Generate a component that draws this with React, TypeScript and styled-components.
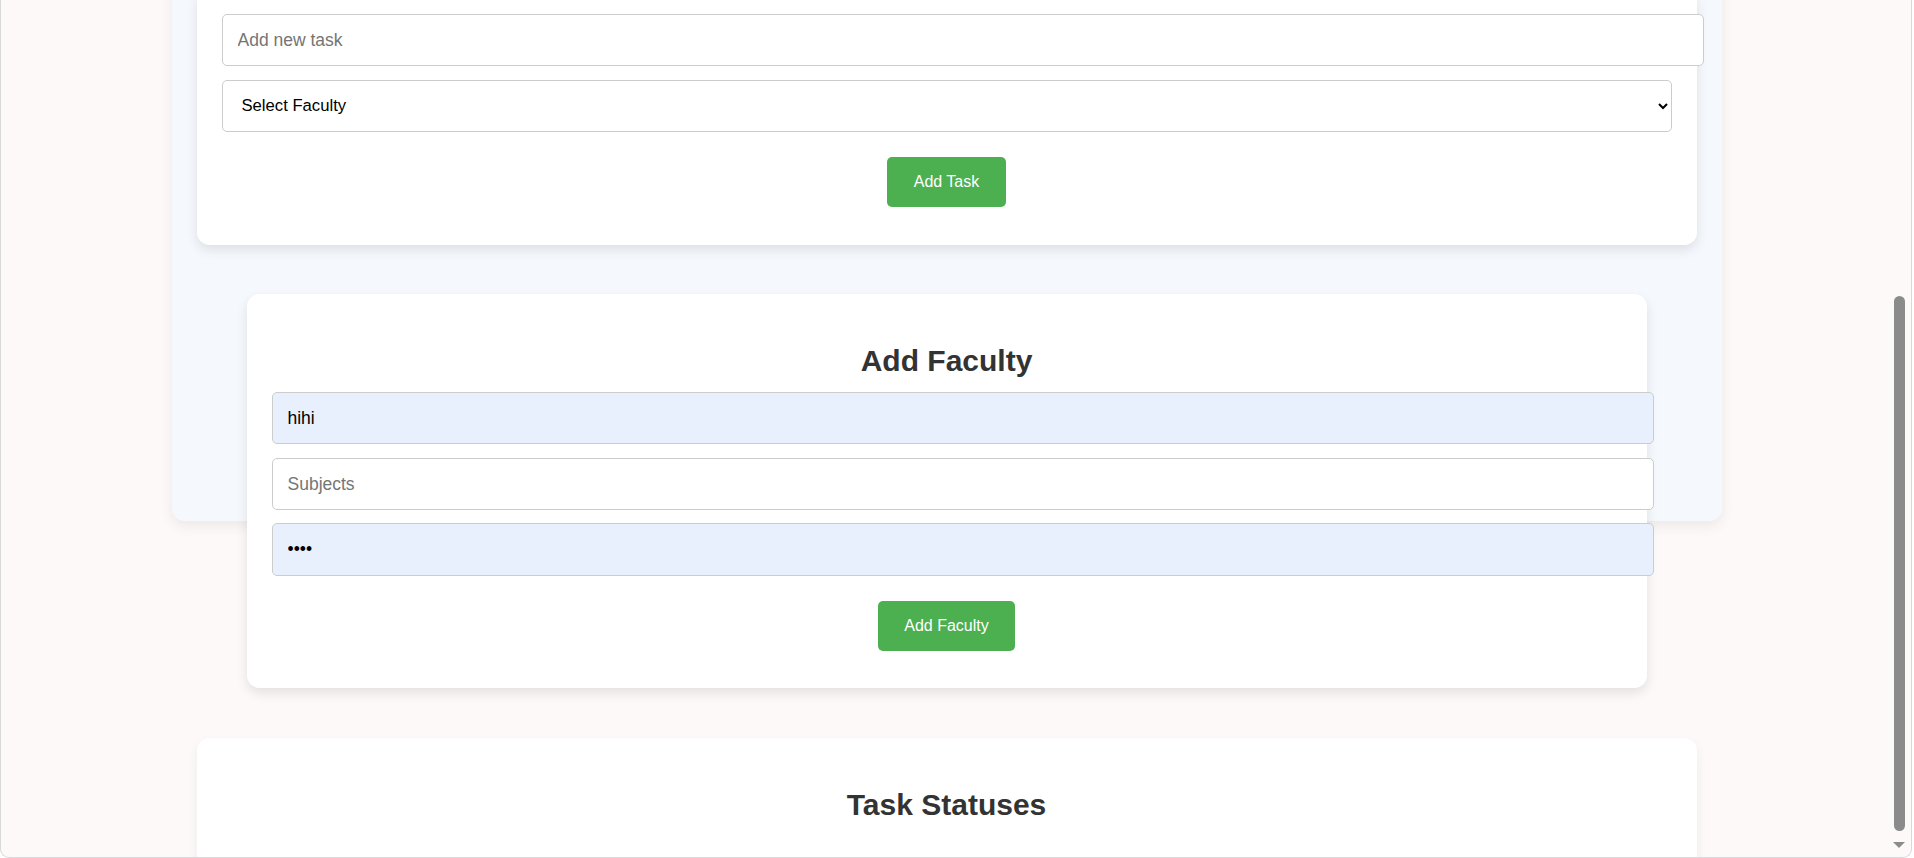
import React from "react";
import styled, {createGlobalStyle} from "styled-components";

const GlobalStyle = createGlobalStyle`
	html, body {
		margin: 0;
		padding: 0;
		background: #ffffff;
		overflow: hidden;
	}
	body {
		font-family: "Liberation Sans", Arial, sans-serif;
	}
`;

const Frame = styled.div`
	display: flex;
	width: 1912px;
	height: 858px;
	box-sizing: border-box;
	border: 1px solid #d9d9d9;
	border-top: none;
	border-radius: 0 0 9px 9px;
	background: #fdf9f8;
	overflow: hidden;
`;

const Viewport = styled.div`
	flex: 1;
	overflow: hidden;
`;

const Column = styled.div`
	display: flex;
	flex-direction: column;
	align-items: center;
	margin-top: -36px;
`;

const Panel = styled.section`
	box-sizing: border-box;
	width: 1550px;
	height: 556.7px;
	padding: 25px;
	background: #f5f8fd;
	border-radius: 12.5px;
	box-shadow: 0 5px 14px rgba(0, 0, 0, 0.07);
`;

const Card = styled.div<{wide?: boolean; raised?: boolean}>`
	position: ${(p) => (p.raised ? "relative" : "static")};
	z-index: ${(p) => (p.raised ? 1 : "auto")};
	box-sizing: border-box;
	width: ${(p) => (p.wide ? "1500px" : "1400px")};
	padding: 25px;
	background: #ffffff;
	border-radius: 12.5px;
	box-shadow: 0 5px 12px rgba(0, 0, 0, 0.1);
	display: flex;
	flex-direction: column;
	align-items: flex-start;
`;

const FacultyCard = styled(Card)`
	margin-top: -226.7px;
`;

const StatusCard = styled(Card)`
	margin-top: 50px;
	min-height: 220px;
	box-shadow: 0 5px 12px rgba(0, 0, 0, 0.06);
`;

const Title = styled.h2`
	align-self: stretch;
	margin: 25px 0 14px;
	font-size: 30px;
	line-height: 34px;
	font-weight: bold;
	color: #333333;
	text-align: center;
`;

const Field = styled.input<{filled?: boolean}>`
	width: 100%;
	margin: 0 0 13.3px;
	padding: 15px;
	border: 1px solid #cccccc;
	border-radius: 5px;
	background: ${(p) => (p.filled ? "#e8f0fe" : "#ffffff")};
	font-family: "Liberation Sans", Arial, sans-serif;
	font-size: 17.5px;
	line-height: 20.4px;
	color: #000000;
	outline: none;

	&::placeholder {
		color: #757575;
	}
`;

const Picker = styled.select`
	width: 100%;
	height: 52.4px;
	margin: 0;
	padding: 0 15px;
	border: 1px solid #cccccc;
	border-radius: 5px;
	background: #ffffff;
	font-family: "Liberation Sans", Arial, sans-serif;
	font-size: 16.67px;
	color: #000000;
`;

const Button = styled.button`
	align-self: center;
	margin: 25px 0 12.5px;
	padding: 15px 26.5px;
	border: none;
	border-radius: 5px;
	background: #4caf50;
	color: #ffffff;
	font-family: "Liberation Sans", Arial, sans-serif;
	font-size: 16px;
	line-height: 20px;
	cursor: pointer;
`;

const FacultyButton = styled(Button)`
	margin-top: 11.7px;
`;

const ScrollTrack = styled.div`
	width: 17px;
	display: flex;
	flex-direction: column;
	align-items: flex-start;
	padding-left: 2px;
`;

const Thumb = styled.div`
	width: 11px;
	height: 535px;
	margin-top: 296px;
	border-radius: 6px;
	background: #8b8b8b;
`;

const Arrow = styled.div`
	width: 0;
	height: 0;
	margin-top: 11px;
	margin-left: -1px;
	border-left: 6.5px solid transparent;
	border-right: 6.5px solid transparent;
	border-top: 6px solid #8b8b8b;
`;

export default () => {
	return (
		<>
			<GlobalStyle />
			<Frame>
				<Viewport>
					<Column>
						<Panel>
							<Card wide>
								<Field placeholder={"Add new task"} />
								<Picker defaultValue={""}>
									<option value={""}>Select Faculty</option>
								</Picker>
								<Button>Add Task</Button>
							</Card>
						</Panel>
						<FacultyCard raised>
							<Title>Add Faculty</Title>
							<Field filled defaultValue={"hihi"} />
							<Field placeholder={"Subjects"} />
							<Field filled type={"password"} defaultValue={"1234"} />
							<FacultyButton>Add Faculty</FacultyButton>
						</FacultyCard>
						<StatusCard wide>
							<Title>Task Statuses</Title>
						</StatusCard>
					</Column>
				</Viewport>
				<ScrollTrack>
					<Thumb />
					<Arrow />
				</ScrollTrack>
			</Frame>
		</>
	);
};
